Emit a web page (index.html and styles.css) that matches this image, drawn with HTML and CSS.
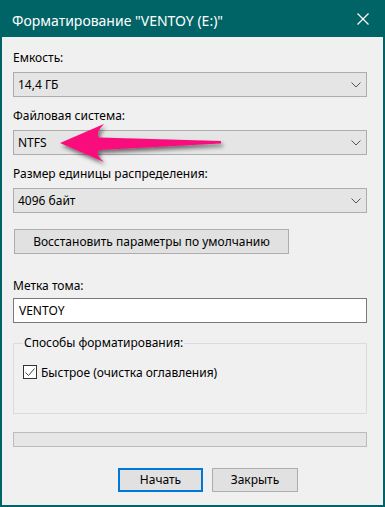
FILE: index.html
```html
<!DOCTYPE html>
<html lang="ru">
<head>
    <meta charset="UTF-8">
    <meta name="viewport" content="width=device-width, initial-scale=1.0">
    <title>Форматирование</title>
    <link rel="stylesheet" href="styles.css">
</head>
<body>

<div class="window">
    <div class="titlebar">
        <span class="title">Форматирование "VENTOY (E:)"</span>
        <svg class="close" width="12" height="12" viewBox="0 0 12 12">
            <path d="M0.5 0.5 L11.5 11.5 M11.5 0.5 L0.5 11.5" stroke="#fff" stroke-width="1.2" fill="none"/>
        </svg>
    </div>

    <div class="content">
        <div class="label">Емкость:</div>
        <div class="combo"><span>14,4 ГБ</span><svg class="chevron" width="10" height="6" viewBox="0 0 10 6"><path d="M0.5 0.5 L5 5 L9.5 0.5" stroke="#555" fill="none"/></svg></div>

        <div class="label">Файловая система:</div>
        <div class="combo"><span>NTFS</span><svg class="chevron" width="10" height="6" viewBox="0 0 10 6"><path d="M0.5 0.5 L5 5 L9.5 0.5" stroke="#555" fill="none"/></svg></div>

        <div class="label">Размер единицы распределения:</div>
        <div class="combo"><span>4096 байт</span><svg class="chevron" width="10" height="6" viewBox="0 0 10 6"><path d="M0.5 0.5 L5 5 L9.5 0.5" stroke="#555" fill="none"/></svg></div>

        <button class="btn reset">Восстановить параметры по умолчанию</button>

        <div class="label label-volume">Метка тома:</div>
        <div class="textbox">VENTOY</div>

        <fieldset class="group">
            <legend>Способы форматирования:</legend>
            <div class="check-row">
                <span class="checkbox">
                    <svg width="12" height="12" viewBox="0 0 12 12"><path d="M1.5 6.5 L4.5 9.5 L10.5 2.5" stroke="#444" stroke-width="1" fill="none"/></svg>
                </span>
                <span>Быстрое (очистка оглавления)</span>
            </div>
        </fieldset>

        <div class="progress"></div>

        <div class="actions">
            <button class="btn primary">Начать</button>
            <button class="btn">Закрыть</button>
        </div>
    </div>

    <svg class="arrow" width="180" height="55" viewBox="50 115 180 55">
        <defs>
            <filter id="shadow" x="-20%" y="-40%" width="140%" height="180%">
                <feDropShadow dx="2" dy="3" stdDeviation="2" flood-color="#000" flood-opacity="0.55"/>
            </filter>
        </defs>
        <path d="M60 143 L104 124 Q95 133 99 137.5 L221 141 L221 143.5 L99 150 Q95 155 104 162 Z" fill="#f90b7d" filter="url(#shadow)"/>
    </svg>
</div>

</body>
</html>
```

FILE: styles.css
```css
body {
    margin: 0;
    font-family: "Noto Sans", sans-serif;
    font-size: 12px;
    color: #000;
}
.window {
    position: relative;
    width: 385px;
    height: 507px;
    display: flex;
    flex-direction: column;
    background: #f0f0f0;
}
.titlebar {
    height: 37px;
    flex-shrink: 0;
    display: flex;
    background: #006466;
    color: #fff;
}
.title {
    font-size: 14px;
    line-height: 20px;
    margin: 11px 0 0 12px;
}
.close {
    margin: 13px 16px 0 auto;
}
.content {
    flex: 1;
    display: flex;
    flex-direction: column;
    border: 2px solid #006466;
    border-top: 0;
    padding: 13px 16px 0 11px;
}
.label {
    line-height: 16px;
    height: 16px;
    margin-top: 11px;
}
.label:first-child {
    margin-top: 0;
}
.combo {
    height: 25px;
    box-sizing: border-box;
    margin-top: 6px;
    display: flex;
    align-items: center;
    justify-content: space-between;
    padding: 0 5px 0 4px;
    background: #e5e5e5;
    border: 1px solid #adadad;
    line-height: 16px;
}
.btn {
    font-family: "Noto Sans", sans-serif;
    font-size: 12px;
    line-height: 16px;
    color: #000;
    height: 24px;
    box-sizing: border-box;
    padding: 0;
    background: #e1e1e1;
    border: 1px solid #adadad;
    border-radius: 0;
}
.reset {
    height: 25px;
    width: 275px;
    margin: 16px 0 0 1px;
}
.label-volume {
    margin-top: 24px;
}
.textbox {
    height: 25px;
    box-sizing: border-box;
    margin-top: 4px;
    padding: 0 5px;
    display: flex;
    align-items: center;
    background: #fff;
    border: 1px solid #7a7a7a;
    line-height: 16px;
}
.group {
    margin: 12px 0 0;
    padding: 0 9px 33px;
    border: 1px solid #dcdcdc;
    min-width: 0;
}
.group legend {
    padding: 0 1px;
    line-height: 16px;
}
.check-row {
    display: flex;
    align-items: center;
    height: 16px;
    margin-top: 13px;
    gap: 4px;
}
.checkbox {
    width: 14px;
    height: 14px;
    box-sizing: border-box;
    border: 1px solid #333;
    background: #fff;
    display: flex;
    align-items: center;
    justify-content: center;
}
.progress {
    height: 15px;
    box-sizing: border-box;
    margin-top: 18px;
    background: #e6e6e6;
    border: 1px solid #bcbcbc;
}
.actions {
    display: flex;
    gap: 9px;
    margin-top: 21px;
    padding-left: 105px;
}
.actions .btn {
    width: 85px;
}
.actions .btn + .btn {
    width: 86px;
}
.primary {
    border: 2px solid #0078d7;
}
.arrow {
    position: absolute;
    left: 50px;
    top: 115px;
}
```
